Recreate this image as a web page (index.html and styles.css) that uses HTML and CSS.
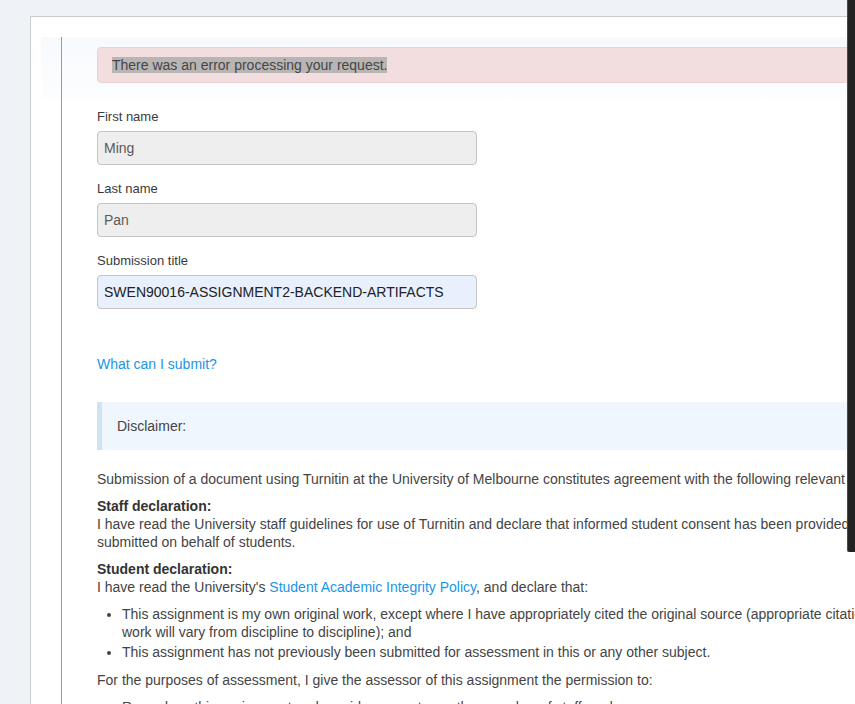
FILE: index.html
```html
<!DOCTYPE html>
<html lang="en">
<head>
<meta charset="utf-8">
<title>Submission</title>
<link rel="stylesheet" href="styles.css">
</head>
<body>
<div class="page">
  <div class="panel">
    <div class="frame">
      <div class="content">
        <div class="alert"><span class="sel">There was an error processing your request.</span></div>

        <div class="form-group">
          <label class="label">First name</label>
          <input class="field field-disabled" type="text" value="Ming" readonly>
        </div>
        <div class="form-group">
          <label class="label">Last name</label>
          <input class="field field-disabled" type="text" value="Pan" readonly>
        </div>
        <div class="form-group">
          <label class="label">Submission title</label>
          <input class="field field-filled" type="text" value="SWEN90016-ASSIGNMENT2-BACKEND-ARTIFACTS">
        </div>

        <p class="help"><a class="link" href="#">What can I submit?</a></p>

        <div class="disclaimer">Disclaimer:</div>

        <div class="terms">
          <p>Submission of a document using Turnitin at the University of Melbourne constitutes agreement with the following relevant policies:</p>
          <p><strong>Staff declaration:</strong><br>I have read the University staff guidelines for use of Turnitin and declare that informed student consent has been provided for all work submitted on behalf of students.</p>
          <p><strong>Student declaration:</strong><br>I have read the University's <a class="link" href="#">Student Academic Integrity Policy</a>, and declare that:</p>
          <ul>
            <li>This assignment is my own original work, except where I have appropriately cited the original source (appropriate citation of others' work will vary from discipline to discipline); and</li>
            <li>This assignment has not previously been submitted for assessment in this or any other subject.</li>
          </ul>
          <p>For the purposes of assessment, I give the assessor of this assignment the permission to:</p>
          <ul>
            <li>Reproduce this assignment and provide a copy to another member of staff; and</li>
          </ul>
        </div>
      </div>
    </div>
  </div>
</div>
<div class="scroll-thumb"></div>
</body>
</html>
```

FILE: styles.css
```css
html, body {
  margin: 0;
  height: 100%;
  overflow: hidden;
}
body {
  background: #eff3f7;
  font-family: "Liberation Sans", Arial, sans-serif;
  font-size: 14px;
  color: #3d3d3d;
}
.page {
  padding: 16px 0 0 30px;
}
.panel {
  background: #fff;
  border-top: 1px solid #cacaca;
  border-left: 1px solid #cacaca;
  padding: 20px 0 0 10px;
  width: 1000px;
}
.frame {
  padding-left: 20px;
  background: linear-gradient(#f7fafd 0, #fcfdfe 60px, #fff 62px);
}
.content {
  border-left: 1px solid #9c9c9c;
  padding: 10px 0 0 35px;
  width: 851px;
  height: 700px;
}
.alert {
  background: #f2dede;
  border: 1px solid #ecd0d3;
  border-radius: 4px;
  padding: 8px 14px;
  line-height: 18px;
  color: #454545;
  margin-bottom: 25px;
}
.sel {
  background: #bab5b5;
}
.form-group {
  margin-bottom: 15px;
}
.label {
  display: block;
  font-size: 13px;
  line-height: 18px;
  margin-bottom: 5px;
  color: #3a3a3a;
}
.field {
  display: block;
  box-sizing: border-box;
  width: 380px;
  height: 34px;
  margin: 0;
  padding: 0 6px;
  border: 1px solid #c4c4c4;
  border-radius: 4px;
  font-family: "Liberation Sans", Arial, sans-serif;
  font-size: 14px;
  outline: none;
}
.field-disabled {
  background: #eeeeee;
  color: #5a5a5a;
}
.field-filled {
  background: #e8f0fe;
  color: #222;
}
.help {
  margin: 47px 0 28px;
  line-height: 17.5px;
}
.link {
  color: #1a95e8;
  text-decoration: none;
}
.disclaimer {
  background: #eff6fd;
  border-left: 5px solid #d0e3f3;
  padding: 15px;
  line-height: 18px;
  color: #444;
  margin-bottom: 20px;
}
.terms {
  line-height: 18px;
  color: #444;
}
.terms p {
  margin: 0 0 9px;
}
.terms strong {
  color: #333;
}
.terms ul {
  margin: 0 0 10px;
  padding-left: 25px;
}
.terms li {
  margin-bottom: 2px;
}
.scroll-thumb {
  position: fixed;
  top: 0;
  right: 0;
  width: 7px;
  height: 552px;
  background: #232323;
  border-left: 1px solid #4a4a4a;
  border-radius: 0 0 0 2px;
}
```
